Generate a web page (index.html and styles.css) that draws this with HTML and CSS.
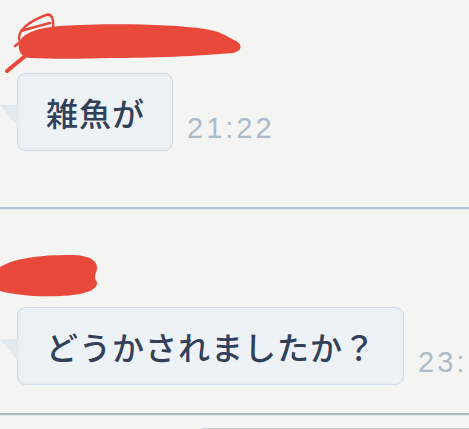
FILE: index.html
```html
<html>
<head>
    <title>Talk</title>
    <link rel="stylesheet" href="styles.css">
</head>
<body>

<div id="thread">

    <div class="msg first">
        <div class="sender">
            <svg width="250" height="73" viewBox="0 0 250 73">
                <path class="ink" d="M19,44 C21,34 35,28 60,26 C110,23 170,24 205,29 C220,31 228,37 236,41 C243,45 242,51 233,53 C200,56 150,58 110,58 C80,59 50,59 30,58 C21,57 18,51 19,44 Z"/>
                <path class="pen" d="M30,52 L7,71"/>
                <path class="pen thin" d="M20,42 C15,31 30,21 46,15 C52,13 54,19 53,30 M21,31 C31,28 42,25 50,23 M15,46 C22,40 29,38 36,41"/>
            </svg>
        </div>
        <div class="line">
            <div class="bubble">雑魚が</div>
            <span class="time">21:22</span>
        </div>
    </div>

    <div class="rule blue"></div>

    <div class="msg second">
        <div class="sender">
            <svg width="120" height="98" viewBox="0 0 120 98">
                <path class="ink" d="M0,57 C15,48 40,45 70,45 C90,45 98,51 97,59 C96,64 93,67 97,72 C98,80 85,85 60,86 C35,87 15,85 0,81 Z"/>
            </svg>
        </div>
        <div class="line">
            <div class="bubble">どうかされましたか？</div>
            <span class="time">23:</span>
        </div>
    </div>

    <div class="rule grey"></div>

    <div class="peek"></div>
</div>

</body>
</html>
```

FILE: styles.css
```css
html, body {
    margin: 0;
    overflow: hidden;
}

body {
    width: 469px;
    height: 429px;
    background: #f4f4f2;
    font-family: "Noto Sans CJK JP", "Noto Sans", sans-serif;
}

#thread {
    width: 469px;
}

.sender svg {
    display: block;
}

.ink {
    fill: #e8493b;
}

.pen {
    fill: none;
    stroke: #e8493b;
    stroke-width: 4;
    stroke-linecap: round;
}

.pen.thin {
    stroke-width: 2.5;
}

.line {
    display: flex;
    align-items: flex-end;
    padding-left: 17px;
    white-space: nowrap;
}

.first .line {
    margin-bottom: 56px;
}

.second .line {
    margin-bottom: 28px;
}

.msg.second .sender {
    height: 97px;
    overflow: hidden;
}

.bubble {
    position: relative;
    padding: 18px 27px 18px 28px;
    font-size: 32px;
    line-height: 40px;
    font-weight: 500;
    letter-spacing: 1px;
    color: #33405a;
    background: #edf2f6;
    border: solid 1px #d3dde6;
    border-radius: 8px;
    box-shadow: inset 0 0 4px #dfe7ee;
}

.bubble::before {
    content: "";
    position: absolute;
    left: -18px;
    top: 31px;
    width: 18px;
    height: 22px;
    background: #e2e9ef;
    clip-path: polygon(0 0, 100% 0, 100% 100%);
}

.time {
    margin-left: 14px;
    margin-bottom: 9px;
    font-family: "Liberation Sans", Arial, sans-serif;
    font-size: 29px;
    line-height: 28px;
    letter-spacing: 3px;
    color: #adbbc9;
}

.rule {
    height: 2px;
}

.rule.blue {
    background: #b7c5d1;
    border-bottom: solid 1px #e6ecf0;
}

.rule.grey {
    background: #aebbbf;
    border-bottom: solid 1px #e4ebec;
}

.peek {
    margin-top: 12px;
    margin-left: 198px;
    height: 10px;
    border-top: solid 2px #c2cdd2;
    border-left: solid 1px #dde4e8;
    border-top-left-radius: 6px;
    background: #f1f3f3;
}
```
